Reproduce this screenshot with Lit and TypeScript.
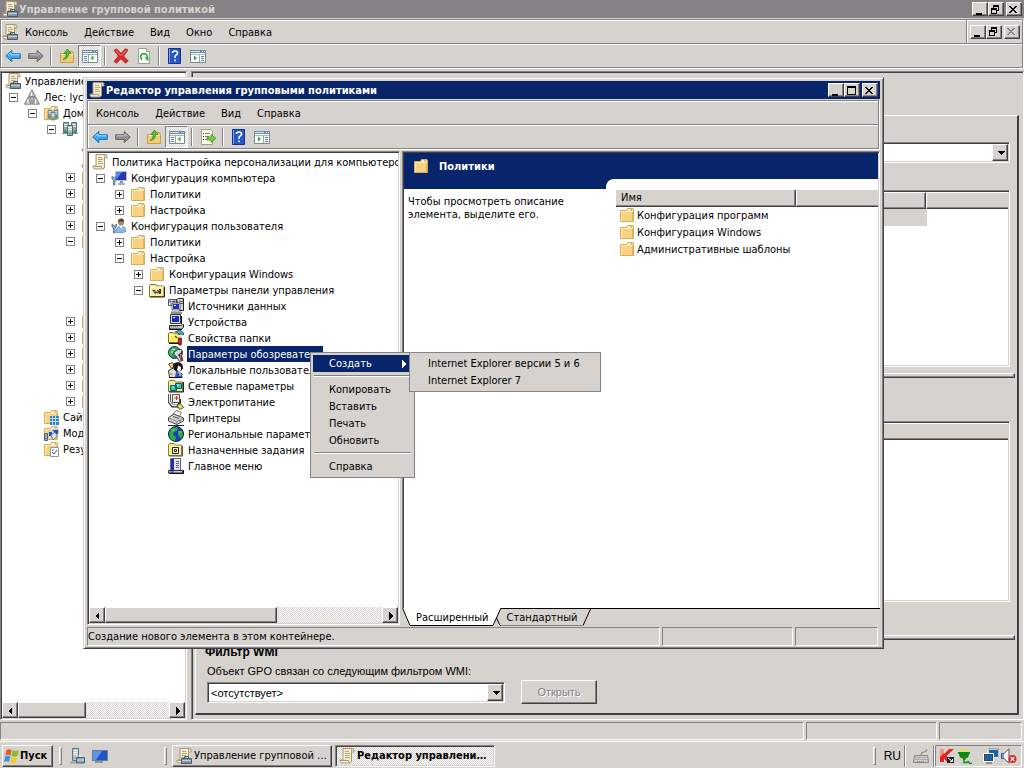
import { LitElement, html, css, svg, nothing, TemplateResult } from "lit";
import { customElement } from "lit/decorators.js";
import { classMap } from "lit/directives/class-map.js";

const folder = svg`
  <path d="M1.500 3.500h6l1-2h5.500l.5 1.500v11.500h-13z" fill="#f6d283" stroke="#d9ab55"/>
  <path d="M8.500 3.500h5M9.500 2.500h3" stroke="#fff8dc"/><path d="M11 3h2" stroke="#7fa6c9"/>
  <path d="M2.500 5v9M2 4.500h11" stroke="#fdeab5"/><path d="M13.500 5v9" stroke="#e5b55f"/>`;

const scroll = svg`
  <path d="M4 .5h9.500q1.500 0 1.500 1.500v2h-2.500v9q0 2-2 2H3q-2 0-2-2v-1h3z" fill="#f3ead0" stroke="#a79a78"/>
  <path d="M12.500 4V2.500q0-1.500 1.200-1.500" fill="none" stroke="#a79a78"/>
  <path d="M6 3.500h4M6 5.500h5M6 7.500h4M6 9.500h5" stroke="#b7a888"/>
  <path d="M1.500 12.500h8q0 2 1 2.200" fill="none" stroke="#a79a78"/>`;

const servers = svg`
  <path d="M1.500 1.500h5v10h-5zM9.500 1.500h5v10h-5z" fill="#8fa1aa" stroke="#5d6d75"/>
  <path d="M5.500 4.500h5v10h-5z" fill="#b4c3ca" stroke="#55656d"/>
  <path d="M2 3.500h4M2 5.500h3M10 3.500h4M11 5.500h3M6 6.500h4M6 8.500h4" stroke="#eef4f6"/>
  <path d="M0 12.500h5M11 12.500h5" stroke="#7d8f98"/>
  <path d="M2 10h2.500M12 10h2.500M7 12.500h2.500" stroke="#35a83f" stroke-width="2"/>`;

const icons: Record<string, TemplateResult> = {
  folder,
  scroll,
  servers,
  gpmc: svg`${scroll}
    <path d="M5.500 10.500h10v5h-10z" fill="#8497a6" stroke="#4a5c6a"/><path d="M8.500 10V8.500h4V10" fill="none" stroke="#4a5c6a"/>
    <path d="M6 12.500h9" stroke="#c6d2da"/>`,
  forest: svg`
    <path d="M8 .8l3.600 6.900H4.400zM4 8.300l3.600 6.900H.5zM12 8.300l3.500 6.900H8.400zM5.300 8.300h5.400L8 13.800z" fill="#bdbdbd" stroke="#6d6d6d" stroke-width=".8"/>
    <path d="M7.500 3v4M4 10v4.500M11.500 10v4.500" stroke="#fff"/>`,
  domains: svg`${folder}<g transform="translate(4 4) scale(.75)">${servers}</g>`,
  sites: svg`${folder}<path d="M7 7h9v9H7z" fill="#2f83c6"/><path d="M7 9.500h9M7 12.500h9M9.500 7v9M12.500 7v9" stroke="#d6ecfb" stroke-width=".8"/>`,
  modeling: svg`${folder}<path d="M5.500 6.500h5v5h-5zM9.500 4.500h6v5h-6z" fill="#2b49b8" stroke="#c8cfe0"/><path d="M8 10l4-3 2 4-4 4z" fill="#d9e3f5" stroke="#4660a8" stroke-width=".7"/><path d="M1.500 8.500h3v7h-3z" fill="#9eaab4" stroke="#55626c"/><path d="M2 13.500h2" stroke="#3fae49"/>`,
  results: svg`${folder}<path d="M7.500 6.500h8v9h-8z" fill="#fff" stroke="#8a9aaa"/><path d="M9 9h2M9 11l2 2 3-4" fill="none" stroke="#2a5db0"/>`,
  computer: svg`
    <path d="M4.500 1.500h11v9h-11z" fill="#2338b8" stroke="#b9bcc4"/><path d="M5 2h6L6 9H5z" fill="#5f83ea"/>
    <path d="M9 11h3v2H9z" fill="#8d9199"/><path d="M7 14h7" stroke="#9aa0a8" stroke-width="1.600"/>
    <path d="M1 6v3l1.500 1V15h1.500v-5l1.500-1V6l-1 1v1H2.500V7z" fill="#8cb4d8" stroke="#3b6390" stroke-width=".7"/>`,
  user: svg`
    <circle cx="10" cy="4.500" r="3" fill="#b98259"/><path d="M7 4q0-3.500 3.200-3.500T13 4q-2-1.500-6 0z" fill="#4c3b2e"/>
    <path d="M5 14.500q0-6 5-6.500 5 .5 5 5.500-3 2-10 1z" fill="#8fb9e2" stroke="#5a86b4" stroke-width=".7"/>
    <path d="M9 8l1 3 1.500-3z" fill="#fff"/>
    <path d="M1 6v3l1.500 1V15h1.500v-5l1.500-1V6l-1 1v1H2.500V7z" fill="#8cb4d8" stroke="#3b6390" stroke-width=".7"/>`,
  cpanel: svg`
    <path d="M.5 14.500v-11l1-1h5l1 1.500h7l.5.500v10z" fill="#f7ef9a" stroke="#7b7420"/>
    <path d="M1.500 5h13M1.500 5v9" stroke="#fffde0"/><path d="M15.500 5v10H1" fill="none" stroke="#222"/>
    <path d="M3 8h3l2 2 3-3v2l-2 3-1-1-2 1z" fill="#555"/><path d="M10 7h2v5h-2z" fill="#333"/><path d="M8 8.500h3M10 11.500h2" stroke="#d33"/><path d="M5 9.500h2" stroke="#2aa"/>`,
  datasource: svg`
    <path d="M.5 1.500h8v6h-8z" fill="#e7e7ef" stroke="#555"/><path d="M1.500 3.500h2M4.500 3.500h3" stroke="#22a" stroke-width="1.500"/><path d="M2 6h5" stroke="#889"/>
    <path d="M8.500 1.500l2-1h5v12h-4z" fill="#cfcfcf" stroke="#222"/><path d="M11 3.500h4M11 5.500h4" stroke="#555"/>
    <path d="M4.500 5.500h7v6h-7z" fill="#1c34b8" stroke="#ddd"/><path d="M4 5h8v7H4z" fill="none" stroke="#333" stroke-width=".6"/><path d="M3 13.500h10" stroke="#bbb"/><path d="M3 15h11" stroke="#222"/><path d="M6 7.500h2" stroke="#fff"/>`,
  device: svg`
    <path d="M2.500.5h10v9h-10z" fill="#ddd" stroke="#333"/><path d="M4 2h7v6H4z" fill="#1630b4"/><path d="M5 3.500h2" stroke="#fff"/>
    <path d="M13.500 2v8" stroke="#111"/><path d="M1.500 11.500h11l3-1v3l-2 1.500h-12z" fill="#c8c8c8" stroke="#222"/><path d="M3 13h8" stroke="#666" stroke-dasharray="1 1"/>
    <path d="M1 15.500h13" stroke="#113"/>`,
  folderopts: svg`
    <path d="M.5 12.500v-9l1-1h4l1 1.500h5v8.500z" fill="#f9ec53" stroke="#77701a"/><path d="M2 5h8M2 5v6" stroke="#fffcc0"/>
    <path d="M1 13.500h10" stroke="#111"/><path d="M7 2l3-1.500h3L15.500 3v2L13 4l-2 1-1-2z" fill="#49a8b0" stroke="#144" stroke-width=".7"/>
    <path d="M11 5h2v3h-2z" fill="#eee"/><path d="M10.500 8h3v6.500l-1.500 1-1.500-1z" fill="#c62020" stroke="#5a0808" stroke-width=".7"/>
    <path d="M7 6l2 2" stroke="#555" stroke-width="1.500"/>`,
  internet: svg`
    <circle cx="6.500" cy="6.500" r="6" fill="#2d9c8e" stroke="#134"/><path d="M2 5q3-4 6-3l1 3-4 1-1 5-3-3z" fill="#46b84a"/><path d="M4 3.500h3M3 6h2" stroke="#cfc"/>
    <path d="M6 6l4-2.500h3.500l1 2v3l-2-1-2 1 3 6.500-2 .5L8 10H6z" fill="#d8d8d8" stroke="#222" stroke-width=".8"/>
    <path d="M13.500 5v3" stroke="#22a"/><path d="M13 9l1.500 6" stroke="#a22020" stroke-width="2"/>`,
  users: svg`
    <path d="M.5 8.500l6-3 8 7-4 3h-9z" fill="#ddd" stroke="#333"/><path d="M.5 2l4-1.500 2 3-3 3z" fill="#f0d050" stroke="#554"/>
    <path d="M5 3q1-3 6-2.700 4 1 4 6l-2 2.700-4 1q-4-2-4-7z" fill="#111"/><path d="M10 3.500l3 1.500v3l-2 2-2-2z" fill="#f2f2f2"/>
    <path d="M8 10l4 1 3 4H7z" fill="#2d4fd0"/><path d="M12 9v5" stroke="#eee"/><path d="M2 12h3" stroke="#b8862c"/><path d="M1 15.500h13" stroke="#111"/>`,
  network: svg`
    <path d="M.5 13.500v-10l1-1h5l1 1.500h7v9.500z" fill="#f7ef9a" stroke="#7b7420"/><path d="M15.500 4v10H1" fill="none" stroke="#222"/>
    <path d="M2.500 7.500h6v5h-6zM7.500 5.500h6v5h-6z" fill="#2ec4cc" stroke="#155"/><path d="M4 9h2M9 7h2" stroke="#bff"/>`,
  power: svg`
    <path d="M1.500 0v8l3 4h5l2-2V5" fill="none" stroke="#222" stroke-width="3"/><path d="M1.500 0v7.500l3 4h5" fill="none" stroke="#eee" stroke-width="1.500"/>
    <path d="M4.500.5h7v8h-7z" fill="#f1ece0" stroke="#555"/><path d="M6.500 4h4M8.500 2v4" stroke="#d22"/>
    <path d="M9 11l3.500-1.500 3 4-4 2z" fill="#f0dc50" stroke="#333" stroke-width=".8"/>`,
  printer: svg`
    <path d="M5 4.500L8 .5l5.500 2L11 7z" fill="#fff" stroke="#777"/><path d="M.5 7.500l5.500-3.500 9.500 4v3l-6.500 3.500-8.500-3.500z" fill="#d2d2d2" stroke="#444"/>
    <path d="M1 8l8 3.500 6-3M9 11.500v3" fill="none" stroke="#888"/><path d="M5 6.500l6 2" stroke="#555"/><path d="M11 11h2" stroke="#2a2"/><path d="M0 15.500h16" stroke="#222"/>`,
  region: svg`
    <circle cx="8" cy="8" r="7.500" fill="#1d3cc2" stroke="#0a1850"/><path d="M3 3q4-3 7-1l-1 3-3 1-1 3 3 2-1 4q-5-1-6-7z" fill="#2fae3c"/>
    <path d="M10 5h4l1 4-2 4-3-4z" fill="#2fae3c"/><path d="M4 4h2M11 6h2" stroke="#9fe6a0"/>`,
  tasks: svg`
    <path d="M.5 13.500v-11l1-1h5l1 1.500h6v10.500z" fill="#f7ef9a" stroke="#8a8430"/><path d="M14.500 4v10H1" fill="none" stroke="#555"/>
    <path d="M4.500 5.500h6v6h-6z" fill="#fff8c8" stroke="#222"/><path d="M6.500 7.500h2v2h-2z" fill="none" stroke="#222"/>`,
  startmenu: svg`
    <path d="M2.500.5h10v12h-10z" fill="#dfe3ee" stroke="#667"/><path d="M3 1h3v11H3z" fill="#1f2fa4"/><path d="M8 3.500h3M8 5.500h3M8 7.500h3M8 9.500h3" stroke="#667"/>
    <path d="M.5 12.500h14v2.500H.5z" fill="#d0d0d0" stroke="#333"/><path d="M2 14h4" stroke="#22a"/><path d="M15.500 12v3.500H1" fill="none" stroke="#111"/>`,
  back: svg`<path d="M.8 8l6-5.500v3.300h8.500v4.600H6.800v3.300z" fill="#3fa9ee" stroke="#1a6cb4"/><path d="M3 7.500l3-2.700v2h8.500" fill="none" stroke="#a8defc"/>`,
  forward: svg`<path d="M15.200 8l-6-5.500v3.300H.7v4.600h8.500v3.300z" fill="#8d8f91" stroke="#5e6062"/><path d="M1.500 6.800h8.500v-2l2.500 2.500" fill="none" stroke="#c4c6c8"/>`,
  up: svg`<path d="M1.500 5.500h5l1-2h6l1 2v9h-13z" fill="#f2cd77" stroke="#c99c46"/><path d="M2.500 6.500h11" stroke="#fdeab5"/>
    <path d="M4 11.500q3-1 3.500-6H5L8.500 1 12 5.500H9.500Q9.500 11 4 11.500z" fill="#55c233" stroke="#2c8a1c" stroke-width=".8"/>`,
  panes: svg`<path d="M.5 2.500h15v12H.5z" fill="#fff" stroke="#7a8794"/><path d="M0 3.500h16" stroke="#6d8cab" stroke-width="3"/><path d="M1 3.500h9M12 3.500h1M14 3.500h1" stroke="#dbe8f4"/>
    <path d="M1 6.500h14" stroke="#aab6c2"/><path d="M2 8.500h3M2 10.500h3M2 12.500h3" stroke="#5d7fa8"/><path d="M6.500 6v8" stroke="#9aa7b4"/><path d="M11.500 7.500v5L8.500 10z" fill="#2fae2a"/>`,
  panes2: svg`<path d="M.5 2.500h15v12H.5z" fill="#fff" stroke="#7a8794"/><path d="M0 3.500h16" stroke="#6d8cab" stroke-width="3"/><path d="M1 3.500h9M12 3.500h1M14 3.500h1" stroke="#dbe8f4"/>
    <path d="M1 6.500h14" stroke="#aab6c2"/><path d="M11 8.500h3M11 10.500h3M11 12.500h3" stroke="#5d7fa8"/><path d="M9.500 6v8" stroke="#9aa7b4"/><path d="M4 7.500v5L7 10z" fill="#2fae2a"/>`,
  remove: svg`<path d="M1 2.500L3.500.8 8 5.300 12.500.8 15 2 10.600 8l4.600 5-2.700 2.200L8 10.800 3.500 15.200 1 13.500 5.400 8z" fill="#dd2a2a" stroke="#a31616" stroke-width=".7"/><path d="M2.500 2.500L8 7.500l5-5" fill="none" stroke="#f58a80"/>`,
  refresh: svg`<path d="M2.500.5h8l3 3v12h-11z" fill="#fff" stroke="#9b9b9b"/><path d="M10.500.5v3h3" fill="#ddd" stroke="#9b9b9b"/>
    <path d="M6 11.500A3.300 3.300 0 1 1 10.500 11" fill="none" stroke="#2fae2a" stroke-width="1.700"/><path d="M8.500 9.500h4v4z" fill="#2fae2a"/>`,
  help: svg`<path d="M1.500.5h12v15h-12z" fill="#2a57c8" stroke="#15338c"/><path d="M2.500 1v14" stroke="#7fa0ee"/><path d="M5.500 5q0-2 2.500-2t2.500 2q0 1.300-1.300 2T8 9v1M8 11.500v1.800" fill="none" stroke="#fff" stroke-width="1.600"/>`,
  export: svg`<path d="M1.500.5h9l2 2v13h-11z" fill="#fffdf0" stroke="#a5a08c"/><path d="M3 4.500h1M3 7.500h1M3 10.500h1" stroke="#333"/><path d="M5 4.500h5M5 7.500h4M5 10.500h3" stroke="#7c8a6a"/>
    <path d="M7 8h4V5.500l5 4-5 4V11H7z" fill="#6fce3a" stroke="#3c9420" stroke-width=".8"/>`,
  flag: svg`<path d="M2.500 2q2.500-1.500 5 0L6.500 7.500q-2.500-1.500-5 0z" fill="#e9592a"/><path d="M8.500 2.300q3 1.500 6.500 0L13.500 8q-3 1.500-6 0z" fill="#83bf35"/>
    <path d="M1.200 8.500q2.500-1.500 5 0L5 14q-2.500-1.500-5 0z" fill="#3e90dc"/><path d="M7.200 9q3 1.500 6 0l-1.200 5.500q-3 1.500-6 0z" fill="#f7c52e"/>`,
  server: svg`<path d="M3.500.5h6v12h-6z" fill="#b9c8d2" stroke="#5f7482"/><path d="M4.500 2.500h4M4.500 4.500h4M4.500 6.500h4" stroke="#f5f9fb"/><path d="M4.500 10h2" stroke="#3fae49"/>
    <path d="M1 13.500h8l-2 2H1z" fill="#93a5b0"/><path d="M7.500 9.500h8v5.500h-8z" fill="#8da0ae" stroke="#4f626f"/><path d="M10 9V7.500h3V9M8 12h7" fill="none" stroke="#dfe8ee"/>`,
  desktop: svg`<path d="M.5 2.500h15v10H.5z" fill="#1e54c4" stroke="#6c7c93"/><path d="M1 3h9l-6 9H1z" fill="#5b96ea"/><path d="M3 14h8" stroke="#8794a6" stroke-width="2"/>`,
  keyboard: svg`<path d="M1.500 7.500h13l1 7H.5z" fill="#cfcfcf" stroke="#848284"/><path d="M2.500 9.500h11M2.500 11.500h11M4 13.500h8" stroke="#848284" stroke-dasharray="1 1"/><path d="M8 7Q8 4 11 4t3-3" fill="none" stroke="#848284"/>`,
  kaspersky: svg`<path d="M1 1h4v5l5-5h5L7.500 8 13 14H8L5 10v4H1z" fill="#df2424"/><path d="M1 1h4v4L1 9z" fill="#f58f88"/><path d="M8 9h7v6H8z" fill="#222"/><path d="M9 10l4 3M13.500 11v2.500H11" fill="none" stroke="#fff"/>`,
  plug: svg`<path d="M4.500 0v4M9.500 0v4" stroke="#e6e430" stroke-width="2"/><path d="M1 4h12v2h-1q0 4-3.500 4.500V12H6v-1.500Q2 10 2 6H1z" fill="#0c8a12"/><path d="M7 12v2.500h3q1-2 2 0t3 .5" fill="none" stroke="#0c8a12" stroke-width="1.400"/>`,
  lan: svg`<path d="M5.500 1.500h10v8h-10z" fill="#1566a8" stroke="#fff"/><path d="M5 1h11v9" fill="none" stroke="#444" stroke-width=".6"/><path d="M.5 5.500h10v8H.500z" fill="#1566a8" stroke="#fff"/><path d="M1.500 6.500h8v6h-8z" fill="none" stroke="#345"/><path d="M3 15h6" stroke="#777" stroke-width="1.500"/>`,
  mute: svg`<path d="M.5 5.500h2.500L8 .8v14.400L3 10.500H.5z" fill="#f4f6f8" stroke="#556"/><path d="M2 6v4" stroke="#7aa2d8" stroke-width="2"/><circle cx="11.500" cy="11" r="4" fill="#dc2b2b"/><path d="M9.800 9.300l3.400 3.400M13.200 9.300l-3.400 3.400" stroke="#fff" stroke-width="1.300"/>`,
};

const icon = (name: string) =>
  html`<svg class="icon" viewBox="0 0 16 16" aria-hidden="true">${icons[name]}</svg>`;

const glyphs: Record<string, TemplateResult> = {
  min: svg`<path d="M3 9h6v2H3z"/>`,
  max: svg`<path d="M2 1h9v9H2zM3 3v6h7V3z" fill-rule="evenodd"/>`,
  restore: svg`<path d="M4 1h6v6H8V6h1V3H5v1H4zM2 4h6v6H2zM3 6v3h4V6z" fill-rule="evenodd"/>`,
  close: svg`<path d="M2 2h2v1h1v1h2V3h1V2h2v1H9v1H8v1H7v1h1v1h1v1h1v1H8V8H7V7H5v1H4v1H2V8h1V7h1V6h1V5H4V4H3V3H2z"/>`,
  left: svg`<path d="M8 2v8L4 6z"/>`,
  right: svg`<path d="M5 2v8l4-4z"/>`,
  down: svg`<path d="M3 4h8L7 8z"/>`,
};
const glyph = (name: string) =>
  html`<svg class="glyph" viewBox="0 0 13 11" aria-hidden="true">${glyphs[name]}</svg>`;

interface Node {
  level: number;
  icon: string;
  text?: string;
  open?: boolean;
  selected?: boolean;
}

const gpmcTree: Node[] = [
  { level: 0, icon: "gpmc", text: "Управление групповой политикой" },
  { level: 1, icon: "forest", text: "Лес: lyc", open: true },
  { level: 2, icon: "domains", text: "Домены", open: true },
  { level: 3, icon: "servers", open: true },
  { level: 4, icon: "scroll" },
  { level: 4, icon: "scroll" },
  { level: 4, icon: "folder", open: false },
  { level: 4, icon: "folder", open: false },
  { level: 4, icon: "folder", open: false },
  { level: 4, icon: "folder", open: false },
  { level: 4, icon: "folder", open: true },
  { level: 5, icon: "scroll" },
  { level: 5, icon: "scroll" },
  { level: 5, icon: "scroll" },
  { level: 5, icon: "scroll" },
  { level: 4, icon: "folder", open: false },
  { level: 4, icon: "folder", open: false },
  { level: 4, icon: "folder", open: false },
  { level: 4, icon: "folder", open: false },
  { level: 4, icon: "folder", open: false },
  { level: 4, icon: "folder", open: false },
  { level: 2, icon: "sites", text: "Сайты" },
  { level: 2, icon: "modeling", text: "Моделирование" },
  { level: 2, icon: "results", text: "Результаты" },
];

const editorTree: Node[] = [
  { level: 0, icon: "scroll", text: "Политика Настройка персонализации для компьютеров" },
  { level: 1, icon: "computer", text: "Конфигурация компьютера", open: true },
  { level: 2, icon: "folder", text: "Политики", open: false },
  { level: 2, icon: "folder", text: "Настройка", open: false },
  { level: 1, icon: "user", text: "Конфигурация пользователя", open: true },
  { level: 2, icon: "folder", text: "Политики", open: false },
  { level: 2, icon: "folder", text: "Настройка", open: true },
  { level: 3, icon: "folder", text: "Конфигурация Windows", open: false },
  { level: 3, icon: "cpanel", text: "Параметры панели управления", open: true },
  { level: 4, icon: "datasource", text: "Источники данных" },
  { level: 4, icon: "device", text: "Устройства" },
  { level: 4, icon: "folderopts", text: "Свойства папки" },
  { level: 4, icon: "internet", text: "Параметры обозревателя", selected: true },
  { level: 4, icon: "users", text: "Локальные пользователи и группы" },
  { level: 4, icon: "network", text: "Сетевые параметры" },
  { level: 4, icon: "power", text: "Электропитание" },
  { level: 4, icon: "printer", text: "Принтеры" },
  { level: 4, icon: "region", text: "Региональные параметры" },
  { level: 4, icon: "tasks", text: "Назначенные задания" },
  { level: 4, icon: "startmenu", text: "Главное меню" },
];

@customElement("app-root")
export class AppRoot extends LitElement {
  static styles = css`
    :host {
      --face: #d6d3ce;
      --shadow: #848284;
      --dark: #424142;
      --navy: #08246b;
      --dither: repeating-conic-gradient(#fff 0 25%, var(--face) 0 50%) 0 0 / 2px 2px;
      display: flex;
      flex-direction: column;
      position: relative;
      height: 100vh;
      overflow: hidden;
      background: var(--face);
      color: #000;
      font: 11px/14px "DejaVu Sans Condensed", "DejaVu Sans", sans-serif;
      cursor: default;
    }
    * { box-sizing: border-box; }
    button, select {
      font: inherit;
      color: inherit;
      margin: 0;
      padding: 0;
      border: 0;
      background: none;
      border-radius: 0;
      appearance: none;
      outline: none;
      white-space: nowrap;
    }
    ul { list-style: none; margin: 0; padding: 0; }
    h1, h2, p { margin: 0; font-size: 11px; }
    .icon { width: 16px; height: 16px; flex: none; display: block; }
    .glyph { width: 13px; height: 11px; display: block; fill: currentColor; shape-rendering: crispEdges; }
    .raised {
      background: var(--face);
      border: 1px solid;
      border-color: #fff var(--dark) var(--dark) #fff;
      box-shadow: inset -1px -1px var(--shadow);
    }
    .sunken {
      border: 1px solid;
      border-color: var(--shadow) #fff #fff var(--shadow);
      box-shadow: inset 1px 1px var(--dark), inset -1px -1px var(--face);
      padding: 1px;
    }
    .thin { border: 1px solid; border-color: var(--shadow) #fff #fff var(--shadow); }

    .title { display: flex; align-items: center; height: 18px; flex: none; padding: 0 2px; background: var(--navy); color: #fff; }
    .title h1 { flex: 1; margin-left: 1px; padding-top: 2px; white-space: nowrap; }
    .title.inactive { background: var(--shadow); color: var(--face); }
    .title.inactive h1 { padding-top: 1px; }
    .controls { display: flex; color: #000; }
    .controls button { width: 16px; height: 14px; }
    .controls button:last-child { margin-left: 2px; }
    .controls button:disabled { color: var(--shadow); }

    .bands { flex: none; margin: 1px 1px 0 0; border: 1px solid var(--shadow); box-shadow: 1px 1px #fff, inset 1px 1px #fff; }
    .menubar { display: flex; align-items: center; height: 24px; border-bottom: 1px solid var(--shadow); }
    .menubar nav { display: flex; flex: 1; }
    .menubar nav button { padding: 2px 8px 0; height: 20px; }
    .menubar .icon { margin-left: 1px; }
    .menubar .icon + nav button:first-child { padding-left: 7px; }
    .menubar .controls { height: 23px; align-items: center; padding: 0 2px 0 3px; border-left: 1px solid var(--shadow); box-shadow: inset 1px 0 #fff; }
    .toolbar { display: flex; align-items: center; height: 23px; border-top: 1px solid #fff; }
    .toolbar button { width: 23px; height: 22px; display: grid; place-items: center; }
    .toolbar button.on { background: var(--dither); }
    .toolbar .sep { width: 2px; height: 18px; margin: 0 3px; border-left: 1px solid var(--shadow); border-right: 1px solid #fff; }

    .workspace { flex: 1; min-height: 0; display: grid; grid-template-columns: 187px minmax(0, 1fr); gap: 4px; margin: 3px 0 2px; }
    .treepane { background: #fff; display: flex; flex-direction: column; min-width: 0; min-height: 0; }
    .tree { flex: 1; overflow: hidden; min-height: 0; }
    .tree li { display: flex; align-items: center; height: 16px; white-space: nowrap; }
    .tree .name { height: 16px; margin-left: 3px; padding: 1px 1px 0; line-height: 15px; }
    .tree .selected { background: var(--navy); color: #fff; }
    .lead { width: 15px; flex: none; }
    .expander { width: 9px; height: 9px; display: block; border: 1px solid var(--shadow); background: #fff; }
    .expander svg { display: block; width: 7px; height: 7px; shape-rendering: crispEdges; }

    .scrollbar { display: flex; height: 16px; flex: none; background: var(--dither); }
    .scrollbar button { width: 16px; display: grid; place-items: center; }
    .scrollbar .track { flex: 1; display: flex; }

    .details { display: flex; min-width: 0; padding: 43px 4px 4px 3px; }
    .page { flex: 1; min-width: 0; display: flex; flex-direction: column; padding: 26px 7px 9px 8px; border: solid; border-width: 1px 2px 2px 1px; border-color: #fff var(--dark) var(--dark) #fff; }
    .combo { display: flex; height: 21px; background: #fff; }
    .combo select { flex: 1; min-width: 0; padding-left: 2px; }
    .combo .drop { width: 16px; flex: none; display: grid; place-items: center; }
    .list { background: #fff; min-height: 0; }
    .list.first { flex: 177 1 0; margin-top: 27px; }
    .list.second { flex: 181 1 0; margin-top: 43px; }
    .list .head { display: flex; height: 17px; }
    .list .head span:first-child { flex: 1; }
    .list .head span:last-child { border-right: 0; box-shadow: inset 0 -1px var(--shadow); }
    .list .head .last { width: 82px; }
    .list .cell { height: 17px; margin-right: 81px; background: var(--face); }
    .bar { height: 5px; flex: none; margin: 6px -5px 0 -7px; }
    .list.second + .bar { margin-top: 33px; }
    .msans { font-family: "Liberation Sans", sans-serif; }
    .page h2 { margin: 5px 0 0 1px; font-size: 12px; line-height: 14px; }
    .page label { margin: 5px 0 0 3px; }
    .wmi { display: flex; align-items: flex-start; gap: 16px; margin: 2px 0 0 3px; }
    .wmi .combo { width: 298px; margin-top: 2px; }
    .wmi > button { width: 76px; height: 24px; color: var(--shadow); text-shadow: 1px 1px #fff; }

    .status { display: grid; grid-template-columns: minmax(0, 1fr) 131px 83px; gap: 2px; height: 18px; flex: none; margin: 0 2px 0 0; white-space: nowrap; line-height: 17px; }

    .taskbar { display: flex; align-items: center; height: 27px; flex: none; margin-top: 1px; padding: 1px 2px 0; border-top: 1px solid #fff; }
    .taskbar .start { display: flex; align-items: center; width: 51px; height: 22px; font-weight: bold; padding-left: 1px; }
    .grip { width: 3px; height: 18px; flex: none; border: 1px solid; border-color: #fff var(--shadow) var(--shadow) #fff; }
    .quick { display: flex; gap: 7px; width: 95px; margin-left: 7px; }
    .start + .grip { margin-left: 6px; }
    .tasks { display: flex; gap: 3px; flex: 1; min-width: 0; margin-left: 5px; }
    .task { display: flex; align-items: center; gap: 2px; width: 160px; height: 22px; padding: 0 3px; }
    .task span { overflow: hidden; text-overflow: ellipsis; }
    .task.active { background: var(--dither); font-weight: bold; }
    .lang { padding: 0 3px 0 8px; font-family: "Liberation Sans", sans-serif; font-size: 12px; }
    .etch { width: 2px; height: 22px; border-left: 1px solid var(--shadow); border-right: 1px solid #fff; }
    .kbd { margin: 0 4px 0 7px; }
    .tray { display: flex; align-items: center; height: 22px; width: 87px; padding-left: 3px; gap: 2px; }
    .tray .gap { margin-left: 8px; }

    .window { position: absolute; left: 83px; top: 77px; width: 801px; height: 572px; display: flex; flex-direction: column; padding: 3px; border: 1px solid; border-color: var(--face) var(--dark) var(--dark) var(--face); box-shadow: inset 1px 1px #fff, inset -1px -1px var(--shadow); background: var(--face); }
    .split { flex: 1; min-height: 0; display: grid; grid-template-columns: 313px minmax(0, 1fr); gap: 2px; margin: 2px 0 1px; }
    .window .tree { padding-top: 1px; }
    .split .treepane { margin-bottom: 1px; }
    .right { display: flex; flex-direction: column; min-width: 0; min-height: 0; }
    .view { flex: 1; display: flex; flex-direction: column; background: #fff; border: 1px solid; border-color: var(--shadow) #fff var(--face) var(--shadow); border-bottom: 0; box-shadow: inset 1px 1px var(--dark), inset -1px 0 var(--face); padding: 1px 1px 0; }
    .banner { display: flex; align-items: flex-start; height: 36px; background: var(--navy); color: #fff; }
    .banner .icon { margin: 5px 10px 0 9px; }
    .banner h2 { width: 167px; margin-top: 7px; }
    .curve { flex: 1; align-self: flex-end; height: 10px; background: #fff; border-top-left-radius: 8px 8px; }
    .columns { display: flex; flex: 1; }
    .hint { width: 212px; padding: 6px 40px 0 4px; line-height: 13px; }
    .items { flex: 1; border-collapse: collapse; table-layout: fixed; align-self: flex-start; }
    .items th { height: 17px; padding: 2px 5px 0; text-align: left; font-weight: normal; line-height: 14px; background: var(--face); border-bottom: 1px solid var(--dark); box-shadow: inset 0 1px #fff, inset -1px 0 var(--dark), inset -2px -1px var(--shadow); }
    .items th:last-child { box-shadow: inset 1px 1px #fff, inset 0 -1px var(--shadow); }
    .items .wide { width: 180px; }
    .items td { padding: 0 0 0 3px; height: 17px; white-space: nowrap; }
    .items td div { display: flex; align-items: flex-start; gap: 2px; height: 17px; line-height: 18px; }
    .tabs { display: flex; height: 18px; flex: none; }
    .tabs svg { width: 8px; height: 18px; flex: none; }
    .tabs button { height: 18px; padding: 1px 6px 0; border-top: 1px solid #000; border-bottom: 1px solid var(--shadow); }
    .tabs button.active { background: #fff; padding: 1px 4px 0 6px; border-top-color: #fff; border-bottom-color: #000; }
    .tabs .rest { flex: 1; border-top: 1px solid #000; }

    .menu { position: absolute; padding: 2px; background: var(--face); border: 1px solid var(--shadow); }
    .menu button { display: flex; align-items: center; justify-content: space-between; width: 100%; height: 17px; padding: 0 0 0 16px; }
    .menu button.hot { background: var(--navy); color: #fff; }
    .menu hr { height: 2px; margin: 3px 1px 4px; border: 0; border-top: 1px solid var(--shadow); border-bottom: 1px solid #fff; }
    .context { left: 310px; top: 352px; width: 105px; }
    .sub { left: 409px; top: 352px; width: 192px; }
    .context .hot .glyph { margin-right: 2px; }
  `;

  private controls(middle: string, closable = true) {
    return html`<div class="controls">
      <button class="raised" aria-label="Свернуть">${glyph("min")}</button>
      <button class="raised" aria-label="Развернуть">${glyph(middle)}</button>
      <button class="raised" aria-label="Закрыть" ?disabled=${!closable}>${glyph("close")}</button>
    </div>`;
  }

  private toolbar(names: string[]) {
    return html`<div class="toolbar" role="toolbar">
      ${names.map((n) =>
        n === "|"
          ? html`<span class="sep"></span>`
          : html`<button class=${classMap({ on: n === "panes", thin: n === "panes" })} aria-label=${n}>${icon(n)}</button>`
      )}
    </div>`;
  }

  private tree(nodes: Node[]) {
    return html`<ul class="tree" role="tree">
      ${nodes.map(
        (n) => html`<li role="treeitem" style="padding-left:${Math.max(3, n.level * 19 - 12)}px">
          ${n.level
            ? html`<span class="lead">${n.open === undefined
                ? nothing
                : html`<button class="expander" aria-label="Узел">
                    <svg viewBox="0 0 7 7"><path d=${n.open ? "M1 3h5v1H1z" : "M1 3h2V1h1v2h2v1H4v2H3V4H1z"} /></svg>
                  </button>`}</span>`
            : nothing}
          ${icon(n.icon)}${n.text
            ? html`<span class=${classMap({ name: true, selected: !!n.selected })}>${n.text}</span>`
            : nothing}
        </li>`
      )}
    </ul>`;
  }

  private scrollbar(size: number) {
    return html`<div class="scrollbar">
      <button class="raised" aria-label="Влево">${glyph("left")}</button>
      <div class="track"><div class="raised" style="width:${size}%"></div></div>
      <button class="raised" aria-label="Вправо">${glyph("right")}</button>
    </div>`;
  }

  private menus(names: string[]) {
    return html`<nav>${names.map((n) => html`<button>${n}</button>`)}</nav>`;
  }

  private editor() {
    return html`<section class="window">
      <header class="title">${icon("scroll")}<h1>Редактор управления групповыми политиками</h1>${this.controls("max")}</header>
      <div class="bands">
        <div class="menubar">${this.menus(["Консоль", "Действие", "Вид", "Справка"])}</div>
        ${this.toolbar(["back", "forward", "|", "up", "panes", "|", "export", "|", "help", "panes2"])}
      </div>
      <div class="split">
        <div class="treepane sunken">${this.tree(editorTree)}${this.scrollbar(62)}</div>
        <div class="right">
          <div class="view">
            <div class="banner">${icon("folder")}<h2>Политики</h2><div class="curve"></div></div>
            <div class="columns">
              <p class="hint">Чтобы просмотреть описание элемента, выделите его.</p>
              <table class="items">
                <thead><tr><th class="wide">Имя</th><th></th></tr></thead>
                <tbody>
                  ${["Конфигурация программ", "Конфигурация Windows", "Административные шаблоны"].map(
                    (t) => html`<tr><td colspan="2"><div>${icon("folder")}${t}</div></td></tr>`
                  )}
                </tbody>
              </table>
            </div>
          </div>
          <div class="tabs" role="tablist">
            <svg viewBox="0 0 8 18"><path d="M0 0h8v18z" fill="#fff" /><path d="M.5 0L8 17.500" stroke="#000" /></svg>
            <button class="active" role="tab">Расширенный</button>
            <svg viewBox="0 0 8 18"><path d="M0 0h8L0 18z" fill="#fff" /><path d="M8 0L0 17.500M3.500 10L7 17.500h1" stroke="#000" fill="none" /></svg>
            <button role="tab">Стандартный</button>
            <svg viewBox="0 0 8 18"><path d="M8 0L0 17.500M0 .5h8" stroke="#000" /></svg>
            <div class="rest"></div>
          </div>
        </div>
      </div>
      <footer class="status"><div class="thin">Создание нового элемента в этом контейнере.</div><div class="thin"></div><div class="thin"></div></footer>
    </section>`;
  }

  render() {
    return html`
      <header class="title inactive">${icon("gpmc")}<h1>Управление групповой политикой</h1>${this.controls("restore")}</header>
      <div class="bands">
        <div class="menubar">
          ${icon("gpmc")}${this.menus(["Консоль", "Действие", "Вид", "Окно", "Справка"])}${this.controls("restore", false)}
        </div>
        ${this.toolbar(["back", "forward", "|", "up", "panes", "|", "remove", "refresh", "|", "help", "panes2"])}
      </div>
      <main class="workspace">
        <div class="treepane sunken">${this.tree(gpmcTree)}${this.scrollbar(45)}</div>
        <div class="details sunken">
          <div class="page">
            <div class="combo sunken"><select aria-label="Расположение"></select><span class="drop raised">${glyph("down")}</span></div>
            <div class="list first sunken">
              <div class="head"><span class="raised"></span><span class="raised last"></span></div>
              <div class="cell"></div>
            </div>
            <div class="bar raised"></div>
            <div class="list second sunken"><div class="head"><span class="raised"></span></div></div>
            <div class="bar raised"></div>
            <h2 class="msans">Фильтр WMI</h2>
            <label class="msans" for="wmi">Объект GPO связан со следующим фильтром WMI:</label>
            <div class="wmi msans">
              <div class="combo sunken">
                <select id="wmi"><option>&lt;отсутствует&gt;</option></select><span class="drop raised">${glyph("down")}</span>
              </div>
              <button class="raised" disabled>Открыть</button>
            </div>
          </div>
        </div>
      </main>
      <footer class="status"><div class="thin"></div><div class="thin"></div><div class="thin"></div></footer>
      <div class="taskbar">
        <button class="start raised">${icon("flag")}Пуск</button>
        <span class="grip"></span>
        <div class="quick">${icon("server")}${icon("desktop")}</div>
        <span class="grip"></span>
        <div class="tasks">
          <button class="task raised">${icon("gpmc")}<span>Управление групповой политикой</span></button>
          <button class="task active sunken">${icon("scroll")}<span>Редактор управления групповыми политиками</span></button>
        </div>
        <span class="grip"></span>
        <span class="lang">RU</span>
        <span class="etch"></span>
        <span class="kbd">${icon("keyboard")}</span>
        <span class="etch"></span>
        <div class="tray thin">${icon("kaspersky")}${icon("plug")}<span class="gap">${icon("lan")}</span>${icon("mute")}</div>
      </div>
      ${this.editor()}
      <div class="menu context" role="menu">
        <button class="hot" role="menuitem">Создать${glyph("right")}</button>
        <hr />
        ${["Копировать", "Вставить", "Печать", "Обновить"].map((t) => html`<button role="menuitem">${t}</button>`)}
        <hr />
        <button role="menuitem">Справка</button>
      </div>
      <div class="menu sub" role="menu">
        <button role="menuitem">Internet Explorer версии 5 и 6</button>
        <button role="menuitem">Internet Explorer 7</button>
      </div>
    `;
  }
}
